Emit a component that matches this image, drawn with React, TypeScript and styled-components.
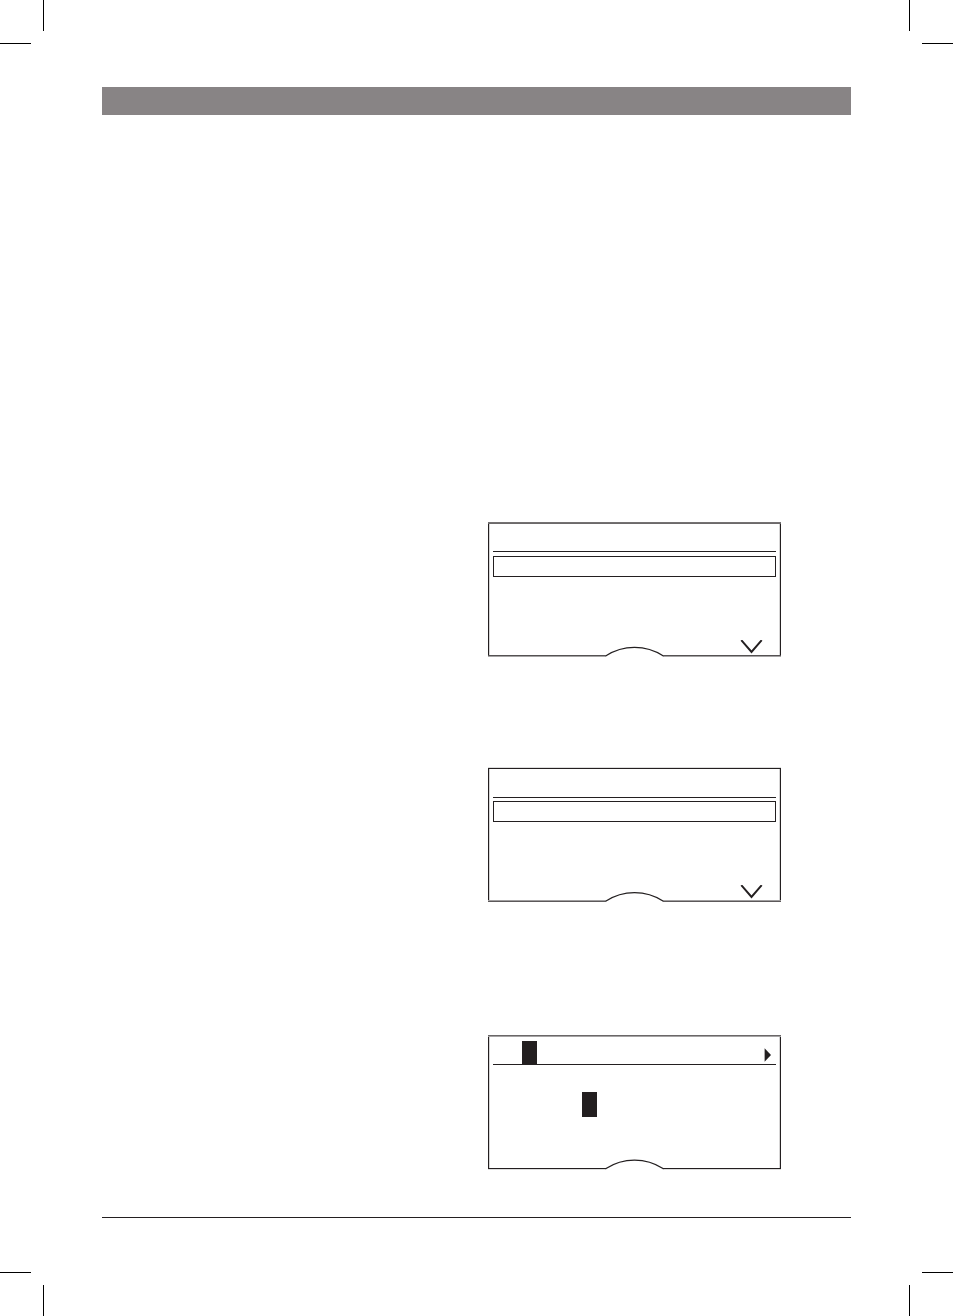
import React from "react";
import styled, { createGlobalStyle } from "styled-components";

const INK = "#231f20";
const HAZE = "#d6d5d5";

const GlobalStyle = createGlobalStyle`
  *, *::before, *::after { box-sizing: border-box; }
  body { margin: 0; background: #fff; font-family: "Liberation Sans", sans-serif; }
  svg { display: block; flex: none; }
`;

const Sheet = styled.div`
  display: flex;
  flex-direction: column;
  min-height: 100vh;
`;

const TrimRow = styled.div`
  display: flex;
  justify-content: space-between;
`;

const Content = styled.main`
  flex: 1;
  display: flex;
  flex-direction: column;
  padding: 43px 102px 54px;
`;

const HeaderBar = styled.header`
  height: 28px;
  background: #888485;
`;

const Columns = styled.div`
  display: grid;
  grid-template-columns: 386fr 293fr 70fr;
  padding: 407px 0 47px;
`;

const Displays = styled.div`
  grid-column: 2;
  display: flex;
  flex-direction: column;
`;

const FooterRule = styled.hr`
  width: 100%;
  height: 1px;
  margin: 0;
  border: 0;
  background: ${INK};
`;

const Panel = styled.section<{ $gap: number }>`
  display: flex;
  flex-direction: column;
  height: 135px;
  margin-top: ${(p) => p.$gap}px;
`;

/* A hairline that is shaded over two pixel rows. */
const Edge = styled.div<{ $upper: string; $lower: string }>`
  border-top: 1px solid ${(p) => p.$upper};
  border-bottom: 1px solid ${(p) => p.$lower};
`;

const Screen = styled.div`
  flex: 1;
  display: flex;
  flex-direction: column;
  padding: 0 4px;
  border: solid ${INK};
  border-width: 0 1px;
  box-shadow: inset 1px 0 ${HAZE}, inset -1px 0 ${HAZE};
`;

const TitleRow = styled.div<{ $height: number }>`
  display: flex;
  align-items: flex-end;
  justify-content: space-between;
  height: ${(p) => p.$height}px;
  padding: 0 5px 0 29px;
  border-bottom: 1px solid ${INK};
`;

const SelectedRow = styled.div<{ $gap: number }>`
  height: 21px;
  margin-top: ${(p) => p.$gap}px;
  border: 1px solid ${INK};
`;

const EntryRow = styled.div`
  display: flex;
  padding: 27px 0 0 89px;
`;

const Cursor = styled.span<{ $height: number }>`
  width: 15px;
  height: ${(p) => p.$height}px;
  background: ${INK};
`;

const Foot = styled.div`
  display: flex;
  align-items: stretch;
  height: 17px;
`;

const FootSide = styled.div`
  flex: 1;
  display: flex;
  flex-direction: column;
`;

const FootWall = styled.div<{ $side: "left" | "right" }>`
  flex: 1;
  display: flex;
  justify-content: flex-end;
  align-items: flex-end;
  padding: 0 17px 1px 0;
  border-${(p) => p.$side}: 1px solid ${INK};
  box-shadow: inset ${(p) => (p.$side === "left" ? 1 : -1)}px 0 ${HAZE};
`;

const NotchSlot = styled.div`
  display: flex;
  align-items: flex-end;
`;

const ArrowSlot = styled.span`
  padding-bottom: 2px;
`;

function TrimMark({ d }: { d: string }) {
  return (
    <svg width="44" height="44" viewBox="0 0 44 44" aria-hidden="true">
      <path d={d} fill="none" stroke="#000" strokeWidth="1" />
    </svg>
  );
}

function Chevron() {
  return (
    <svg width="23" height="14" viewBox="0 0 23 14" aria-hidden="true">
      <path d="M1.3 0.2 L11.5 12 L21.7 0.2" fill="none" stroke={INK} strokeWidth="2" />
    </svg>
  );
}

function Arrow() {
  return (
    <svg width="7" height="14" viewBox="0 0 7 14" aria-hidden="true">
      <path d="M0.6 0.2 L7 7 L0.6 13.8 Z" fill={INK} />
    </svg>
  );
}

function Notch({ line }: { line: number }) {
  return (
    <svg width="59" height="11" viewBox="0 0 59 11" aria-hidden="true">
      <path
        d={`M0 ${line} H1 C18 ${line - 11.3} 41 ${line - 11.3} 58 ${line} H59`}
        fill="none"
        stroke={INK}
        strokeWidth="1.2"
      />
    </svg>
  );
}

type Shade = [string, string];

interface DisplayProps {
  gap: number;
  top: Shade;
  bottom: Shade;
  line: number;
  more?: boolean;
  children: React.ReactNode;
}

function Display({ gap, top, bottom, line, more, children }: DisplayProps) {
  return (
    <Panel $gap={gap}>
      <Edge $upper={top[0]} $lower={top[1]} />
      <Screen>{children}</Screen>
      <Foot>
        <FootSide>
          <FootWall $side="left" />
          <Edge $upper={bottom[0]} $lower={bottom[1]} />
        </FootSide>
        <NotchSlot>
          <Notch line={line} />
        </NotchSlot>
        <FootSide>
          <FootWall $side="right">{more && <Chevron />}</FootWall>
          <Edge $upper={bottom[0]} $lower={bottom[1]} />
        </FootSide>
      </Foot>
    </Panel>
  );
}

export default function App() {
  return (
    <>
      <GlobalStyle />
      <Sheet>
        <TrimRow>
          <TrimMark d="M43.5 0 V31 M0 43.5 H31" />
          <TrimMark d="M0.5 0 V31 M13 43.5 H44" />
        </TrimRow>
        <Content>
          <HeaderBar />
          <Columns>
            <Displays>
              <Display gap={0} top={["#747172", "#6c696a"]} bottom={["#555253", "#a5a3a4"]} line={9.8} more>
                <TitleRow $height={28} />
                <SelectedRow $gap={4} />
              </Display>
              <Display gap={110} top={["#dddddd", INK]} bottom={["#a09e9f", "#5c595a"]} line={10.1} more>
                <TitleRow $height={29} />
                <SelectedRow $gap={3} />
              </Display>
              <Display gap={133} top={["#6a6768", "#a5a3a4"]} bottom={[INK, "#dddddd"]} line={9.6}>
                <TitleRow $height={28}>
                  <Cursor $height={23} />
                  <ArrowSlot>
                    <Arrow />
                  </ArrowSlot>
                </TitleRow>
                <EntryRow>
                  <Cursor $height={25} />
                </EntryRow>
              </Display>
            </Displays>
          </Columns>
          <FooterRule />
        </Content>
        <TrimRow>
          <TrimMark d="M43.5 44 V13 M0 0.5 H31" />
          <TrimMark d="M0.5 44 V13 M13 0.5 H44" />
        </TrimRow>
      </Sheet>
    </>
  );
}
